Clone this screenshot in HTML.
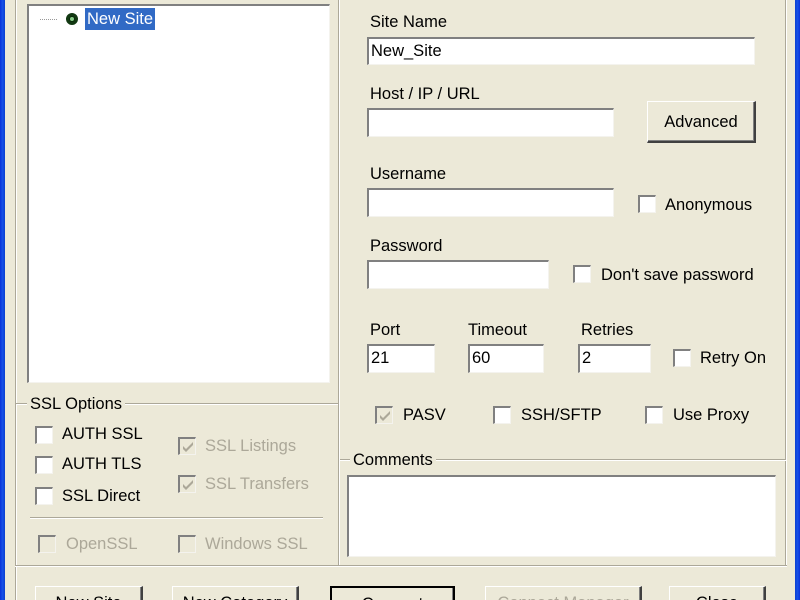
<!DOCTYPE html><html><head><style>
html,body{margin:0;width:800px;height:600px;overflow:hidden}
body{background:#ECE9D8;position:relative;font-family:"Liberation Sans",sans-serif;font-size:16.5px;color:#000}
#w{position:absolute;left:0;top:0;width:800px;height:600px;overflow:hidden}
div,span{position:absolute;box-sizing:border-box}
.t{white-space:nowrap;line-height:20px}
.in{background:#fff;border-top:2px solid #808080;border-left:2px solid #808080;border-bottom:1px solid #f4f3ee;border-right:1px solid #f4f3ee;padding-left:2px;line-height:24px}
.cb{width:18px;height:18px;background:#fff;border-top:2px solid #808080;border-left:2px solid #808080;border-bottom:1px solid #f4f3ee;border-right:1px solid #f4f3ee}
.cb.d{background:#ECE9D8}
.cb svg{position:absolute;left:1px;top:1px}
.dis{color:#aca899}
.btn{border:1px solid #fff;border-right:2px solid #404040;border-bottom:2px solid #404040;background:#ECE9D8;text-align:center;line-height:20px;padding-top:6px;box-shadow:inset -1px -1px 0 #808080}
.gl{height:2px;border-top:1px solid #aca899;border-bottom:1px solid #fff}
.vl{width:2px;border-left:1px solid #aca899;border-right:1px solid #fff}
</style></head><body><div id="w">
<div style="left:0;top:0;width:5px;height:600px;background:linear-gradient(90deg,#0831d9,#1650e8,#0a3fd0)"></div>
<div style="left:795px;top:0;width:5px;height:600px;background:linear-gradient(90deg,#0a3fd0,#1650e8,#0831d9)"></div>
<div class="vl" style="left:15px;top:0;height:567px"></div>
<div class="vl" style="left:338px;top:0;height:567px"></div>
<div class="vl" style="left:785px;top:0;height:567px"></div>
<div class="gl" style="left:15px;top:565px;width:772px"></div>
<div class="vl" style="left:15px;top:567px;height:40px"></div>
<div style="left:27px;top:4px;width:303px;height:379px;background:#fff;border-top:2px solid #808080;border-left:2px solid #808080;border-bottom:1px solid #f4f3ee;border-right:1px solid #f4f3ee"></div>
<div style="left:40px;top:19px;width:17px;border-top:1px dotted #999"></div>
<div style="left:66px;top:13px;width:12px;height:12px;border-radius:50%;background:#0a2a0a;border:3px solid #123812"><span style="left:1px;top:1px;width:4px;height:4px;border-radius:50%;background:#8c8"></span></div>
<div class="t" style="left:85px;top:8px;height:22px;padding:1px 2px;background:#316ac5;color:#fff;line-height:20px">New Site</div>
<div class="gl" style="left:16px;top:403px;width:322px"></div>
<div class="t" style="left:27px;top:394px;background:#ECE9D8;padding:0 3px">SSL Options</div>
<div class="cb" style="left:35px;top:426px"></div><div class="t" style="left:62px;top:424px">AUTH SSL</div>
<div class="cb" style="left:35px;top:456px"></div><div class="t" style="left:62px;top:454px">AUTH TLS</div>
<div class="cb" style="left:35px;top:487px"></div><div class="t" style="left:62px;top:486px">SSL Direct</div>
<div class="cb d" style="left:178px;top:437px"><svg width="14" height="14"><path d="M2 6l3 3 7-7v3l-7 7-3-3z" fill="#aca899"/></svg></div><div class="t dis" style="left:205px;top:436px">SSL Listings</div>
<div class="cb d" style="left:178px;top:475px"><svg width="14" height="14"><path d="M2 6l3 3 7-7v3l-7 7-3-3z" fill="#aca899"/></svg></div><div class="t dis" style="left:205px;top:474px">SSL Transfers</div>
<div class="gl" style="left:30px;top:517px;width:293px"></div>
<div class="cb d" style="left:38px;top:535px"></div><div class="t dis" style="left:66px;top:534px">OpenSSL</div>
<div class="cb d" style="left:178px;top:535px"></div><div class="t dis" style="left:205px;top:534px">Windows SSL</div>
<div class="t" style="left:370px;top:12px">Site Name</div>
<div class="in" style="left:367px;top:37px;width:388px;height:28px">New_Site</div>
<div class="t" style="left:370px;top:84px">Host / IP / URL</div>
<div class="in" style="left:367px;top:108px;width:247px;height:29px"></div>
<div class="btn" style="left:647px;top:101px;width:109px;height:42px;padding-top:10px">Advanced</div>
<div class="t" style="left:370px;top:164px">Username</div>
<div class="in" style="left:367px;top:188px;width:247px;height:29px"></div>
<div class="cb" style="left:638px;top:195px"></div><div class="t" style="left:665px;top:195px">Anonymous</div>
<div class="t" style="left:370px;top:236px">Password</div>
<div class="in" style="left:367px;top:260px;width:182px;height:29px"></div>
<div class="cb" style="left:573px;top:265px"></div><div class="t" style="left:601px;top:265px">Don't save password</div>
<div class="t" style="left:370px;top:320px">Port</div>
<div class="in" style="left:367px;top:344px;width:68px;height:29px">21</div>
<div class="t" style="left:468px;top:320px">Timeout</div>
<div class="in" style="left:468px;top:344px;width:76px;height:29px">60</div>
<div class="t" style="left:581px;top:320px">Retries</div>
<div class="in" style="left:578px;top:344px;width:73px;height:29px">2</div>
<div class="cb" style="left:673px;top:349px"></div><div class="t" style="left:700px;top:348px">Retry On</div>
<div class="cb d" style="left:375px;top:406px"><svg width="14" height="14"><path d="M2 6l3 3 7-7v3l-7 7-3-3z" fill="#aca899"/></svg></div><div class="t" style="left:403px;top:405px">PASV</div>
<div class="cb" style="left:493px;top:406px"></div><div class="t" style="left:521px;top:405px">SSH/SFTP</div>
<div class="cb" style="left:645px;top:406px"></div><div class="t" style="left:673px;top:405px">Use Proxy</div>
<div class="gl" style="left:340px;top:459px;width:446px"></div>
<div class="t" style="left:350px;top:450px;background:#ECE9D8;padding:0 3px">Comments</div>
<div class="in" style="left:347px;top:475px;width:429px;height:82px"></div>
<div class="btn" style="left:35px;top:586px;width:108px;height:40px">New Site</div>
<div class="btn" style="left:172px;top:586px;width:127px;height:40px">New Category</div>
<div class="btn" style="left:330px;top:586px;width:125px;height:40px;border:2px solid #000">Connect</div>
<div class="btn dis" style="left:485px;top:586px;width:157px;height:40px">Connect Manager</div>
<div class="btn" style="left:669px;top:586px;width:97px;height:40px">Close</div>
</div></body></html>
